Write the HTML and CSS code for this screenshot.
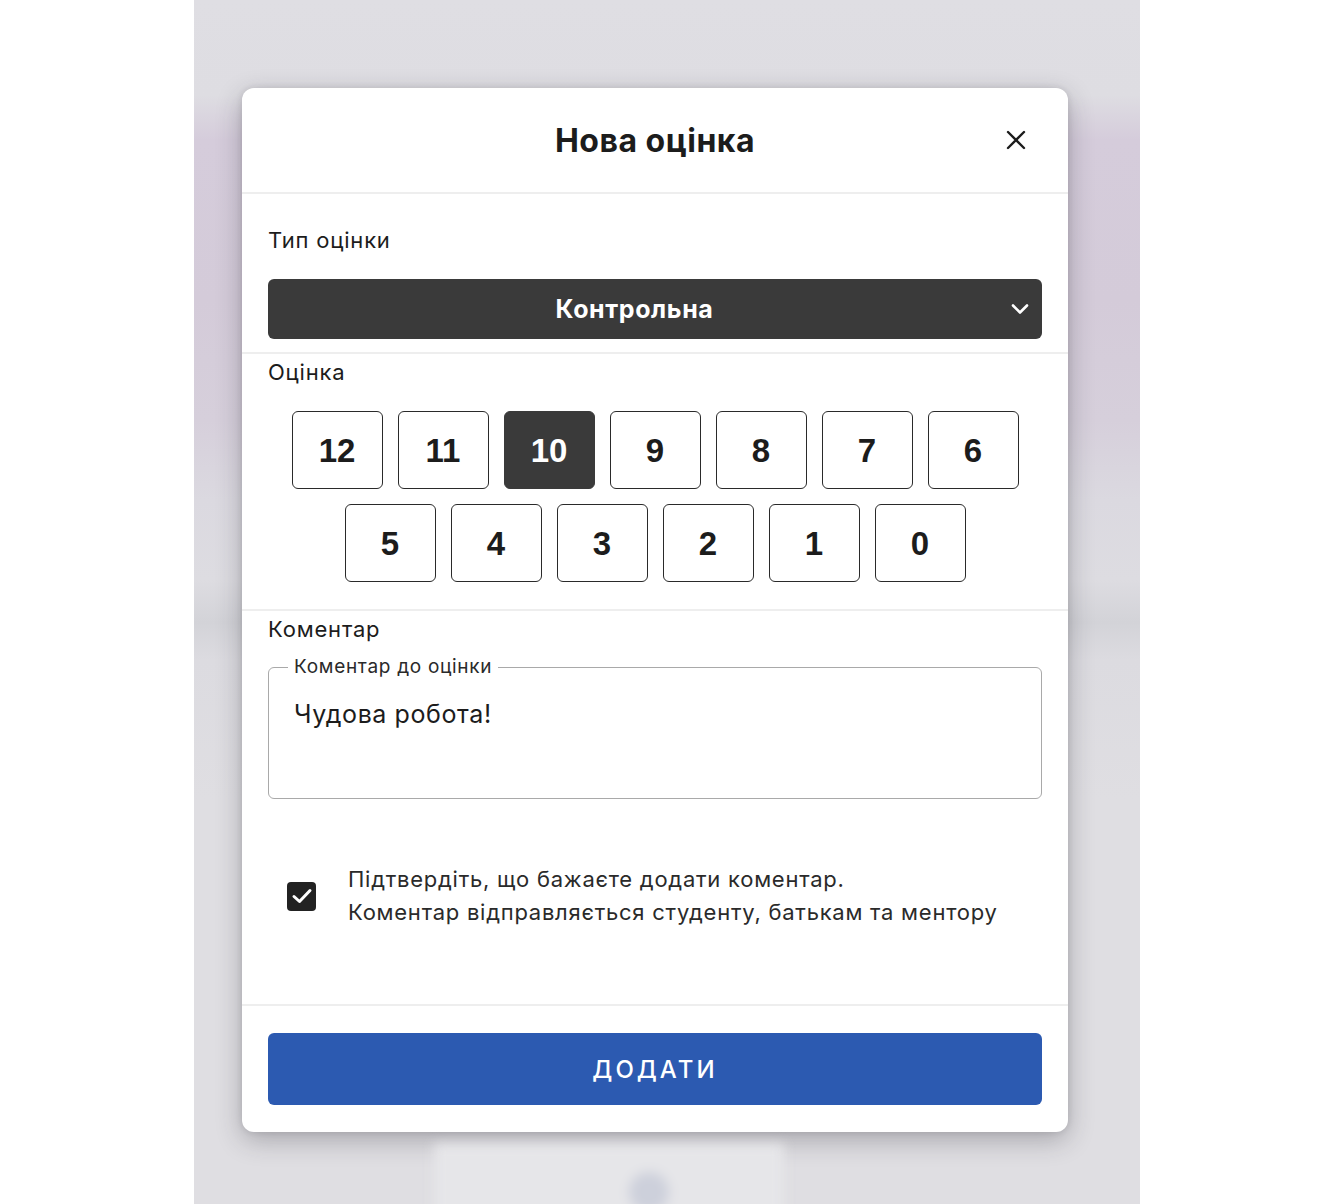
FILE: index.html
```html
<!DOCTYPE html>
<html lang="uk">
<head>
<meta charset="utf-8">
<title>Нова оцінка</title>
<link rel="stylesheet" href="styles.css">
</head>
<body>
<div class="page">
  <div class="side"></div>
  <div class="stage">
    <div class="modal">
      <header class="modal-header">
        <h1 class="modal-title">Нова оцінка</h1>
        <button class="close-btn" aria-label="Закрити">
          <svg width="20" height="20" viewBox="0 0 20 20"><path d="M2 2 L18 18 M18 2 L2 18" stroke="#1c1c1c" stroke-width="2.4" stroke-linecap="round" fill="none"/></svg>
        </button>
      </header>

      <section class="section section-type">
        <div class="label">Тип оцінки</div>
        <div class="select">
          <span class="select-text">Контрольна</span>
          <svg class="chevron" width="18" height="12" viewBox="0 0 18 12"><path d="M2 2.5 L9 9.5 L16 2.5" stroke="#fff" stroke-width="2.6" stroke-linecap="round" stroke-linejoin="round" fill="none"/></svg>
        </div>
      </section>

      <section class="section section-grade">
        <div class="label">Оцінка</div>
        <div class="grades">
          <div class="grade-row">
            <button class="grade">12</button>
            <button class="grade">11</button>
            <button class="grade grade-active">10</button>
            <button class="grade">9</button>
            <button class="grade">8</button>
            <button class="grade">7</button>
            <button class="grade">6</button>
          </div>
          <div class="grade-row">
            <button class="grade">5</button>
            <button class="grade">4</button>
            <button class="grade">3</button>
            <button class="grade">2</button>
            <button class="grade">1</button>
            <button class="grade">0</button>
          </div>
        </div>
      </section>

      <section class="section section-comment">
        <div class="label">Коментар</div>
        <fieldset class="comment-box">
          <legend class="comment-legend">Коментар до оцінки</legend>
          <div class="comment-text">Чудова робота!</div>
        </fieldset>
        <div class="confirm">
          <span class="checkbox">
            <svg width="22" height="18" viewBox="0 0 22 18"><path d="M3 9.5 L8.5 14.5 L19 3.5" stroke="#fff" stroke-width="3" stroke-linecap="round" stroke-linejoin="round" fill="none"/></svg>
          </span>
          <div class="confirm-text">
            <div>Підтвердіть, що бажаєте додати коментар.</div>
            <div>Коментар відправляється студенту, батькам та ментору</div>
          </div>
        </div>
      </section>

      <footer class="modal-footer">
        <button class="submit">ДОДАТИ</button>
      </footer>
    </div>
    <div class="backdrop-bottom">
      <div class="blur-card"><span class="blur-dot"></span></div>
    </div>
  </div>
  <div class="side"></div>
</div>
</body>
</html>
```

FILE: styles.css
```css
* { box-sizing: border-box; }

html, body {
  margin: 0;
  padding: 0;
  background: #ffffff;
}

body {
  font-family: Inter, "Noto Sans", "Liberation Sans", sans-serif;
  color: #1c1c1c;
}

.page {
  display: flex;
  width: 1334px;
  height: 1204px;
  overflow: hidden;
}

.side {
  width: 194px;
  flex: 0 0 194px;
  background: #ffffff;
}

.stage {
  width: 946px;
  flex: 0 0 946px;
  height: 1204px;
  overflow: hidden;
  padding-top: 88px;
  background: linear-gradient(to bottom,
    #dfdee3 0px,
    #dedde2 95px,
    #d5ccdb 140px,
    #d4cbd9 300px,
    #d6cfdb 420px,
    #dbd9e0 500px,
    #dddce1 580px,
    #d3d3d8 622px,
    #dcdbe0 660px,
    #dfdee2 800px,
    #dfdee2 1204px);
}

.modal {
  width: 826px;
  margin-left: 48px;
  background: #ffffff;
  border-radius: 12px;
  box-shadow: 0 8px 26px rgba(40, 40, 50, 0.30), 0 0 6px rgba(40, 40, 50, 0.12);
  display: flex;
  flex-direction: column;
}

.modal-header {
  position: relative;
  height: 106px;
  display: flex;
  align-items: center;
  justify-content: center;
  border-bottom: 2px solid #eeeeee;
}

.modal-title {
  margin: 0;
  font-size: 32px;
  font-weight: 700;
  color: #1c1c1c;
  letter-spacing: 0.5px;
}

.close-btn {
  position: absolute;
  right: 42px;
  top: 42px;
  width: 20px;
  height: 20px;
  padding: 0;
  border: none;
  background: none;
  display: flex;
}

.section {
  padding: 0 26px;
  border-bottom: 2px solid #eeeeee;
}

.label {
  font-size: 22px;
  line-height: 30px;
  color: #1c1c1c;
  letter-spacing: 0.8px;
}

.section-type {
  padding-top: 31px;
  padding-bottom: 13px;
}

.select {
  margin-top: 24px;
  height: 60px;
  background: #3a3a3a;
  border-radius: 6px;
  display: flex;
  align-items: center;
  padding-right: 13px;
}

.select-text {
  flex: 1;
  text-align: center;
  color: #ffffff;
  font-size: 25px;
  font-weight: 700;
  padding-right: 10px;
  letter-spacing: 0.6px;
}

.chevron {
  display: block;
}

.section-grade {
  padding-top: 3px;
  padding-bottom: 27px;
}

.grades {
  margin-top: 24px;
  display: flex;
  flex-direction: column;
  align-items: center;
  gap: 15px;
}

.grade-row {
  display: flex;
  gap: 15px;
}

.grade {
  width: 91px;
  height: 78px;
  border: 1.6px solid #2a2a2a;
  border-radius: 6px;
  background: #ffffff;
  color: #1c1c1c;
  font-family: "Liberation Sans", Arial, sans-serif;
  font-weight: 700;
  font-size: 33px;
  padding: 2px 0 0 0;
  display: flex;
  align-items: center;
  justify-content: center;
}

.grade-active {
  background: #3a3a3a;
  border-color: #3a3a3a;
  color: #ffffff;
}

.section-comment {
  padding-top: 3px;
  padding-bottom: 75px;
}

.comment-box {
  margin: 12px 0 0 0;
  padding: 20px 25px 0 25px;
  height: 143px;
  border: 1.5px solid #a9a9a9;
  border-radius: 6px;
  min-width: 0;
}

.comment-legend {
  font-size: 19px;
  line-height: 22px;
  color: #2a2a2a;
  padding: 0 6px;
  margin-left: -6px;
  letter-spacing: 0.7px;
}

.comment-text {
  font-size: 25px;
  line-height: 32px;
  color: #1c1c1c;
  letter-spacing: 0.6px;
}

.confirm {
  margin-top: 64px;
  display: flex;
  align-items: center;
  padding-left: 19px;
}

.checkbox {
  width: 29px;
  height: 29px;
  border-radius: 4px;
  background: #222222;
  display: flex;
  align-items: center;
  justify-content: center;
  flex: 0 0 29px;
}

.confirm-text {
  margin-left: 32px;
  font-size: 22px;
  line-height: 33px;
  color: #2a2a2a;
  letter-spacing: 0.75px;
}

.modal-footer {
  padding: 27px 26px 27px 26px;
}

.submit {
  width: 100%;
  height: 72px;
  border: none;
  border-radius: 6px;
  background: #2c5ab1;
  color: #ffffff;
  font-family: Inter, "Noto Sans", "Liberation Sans", sans-serif;
  font-size: 24px;
  font-weight: 500;
  letter-spacing: 3px;
  padding: 0;
}

.backdrop-bottom {
  margin-top: 12px;
  height: 90px;
  padding-left: 240px;
  filter: blur(6px);
}

.blur-card {
  width: 350px;
  height: 90px;
  background: #e6e6e9;
  display: flex;
  justify-content: center;
  padding-top: 28px;
}

.blur-dot {
  width: 40px;
  height: 40px;
  border-radius: 50%;
  background: #cdd0db;
  margin-left: 80px;
}
```
